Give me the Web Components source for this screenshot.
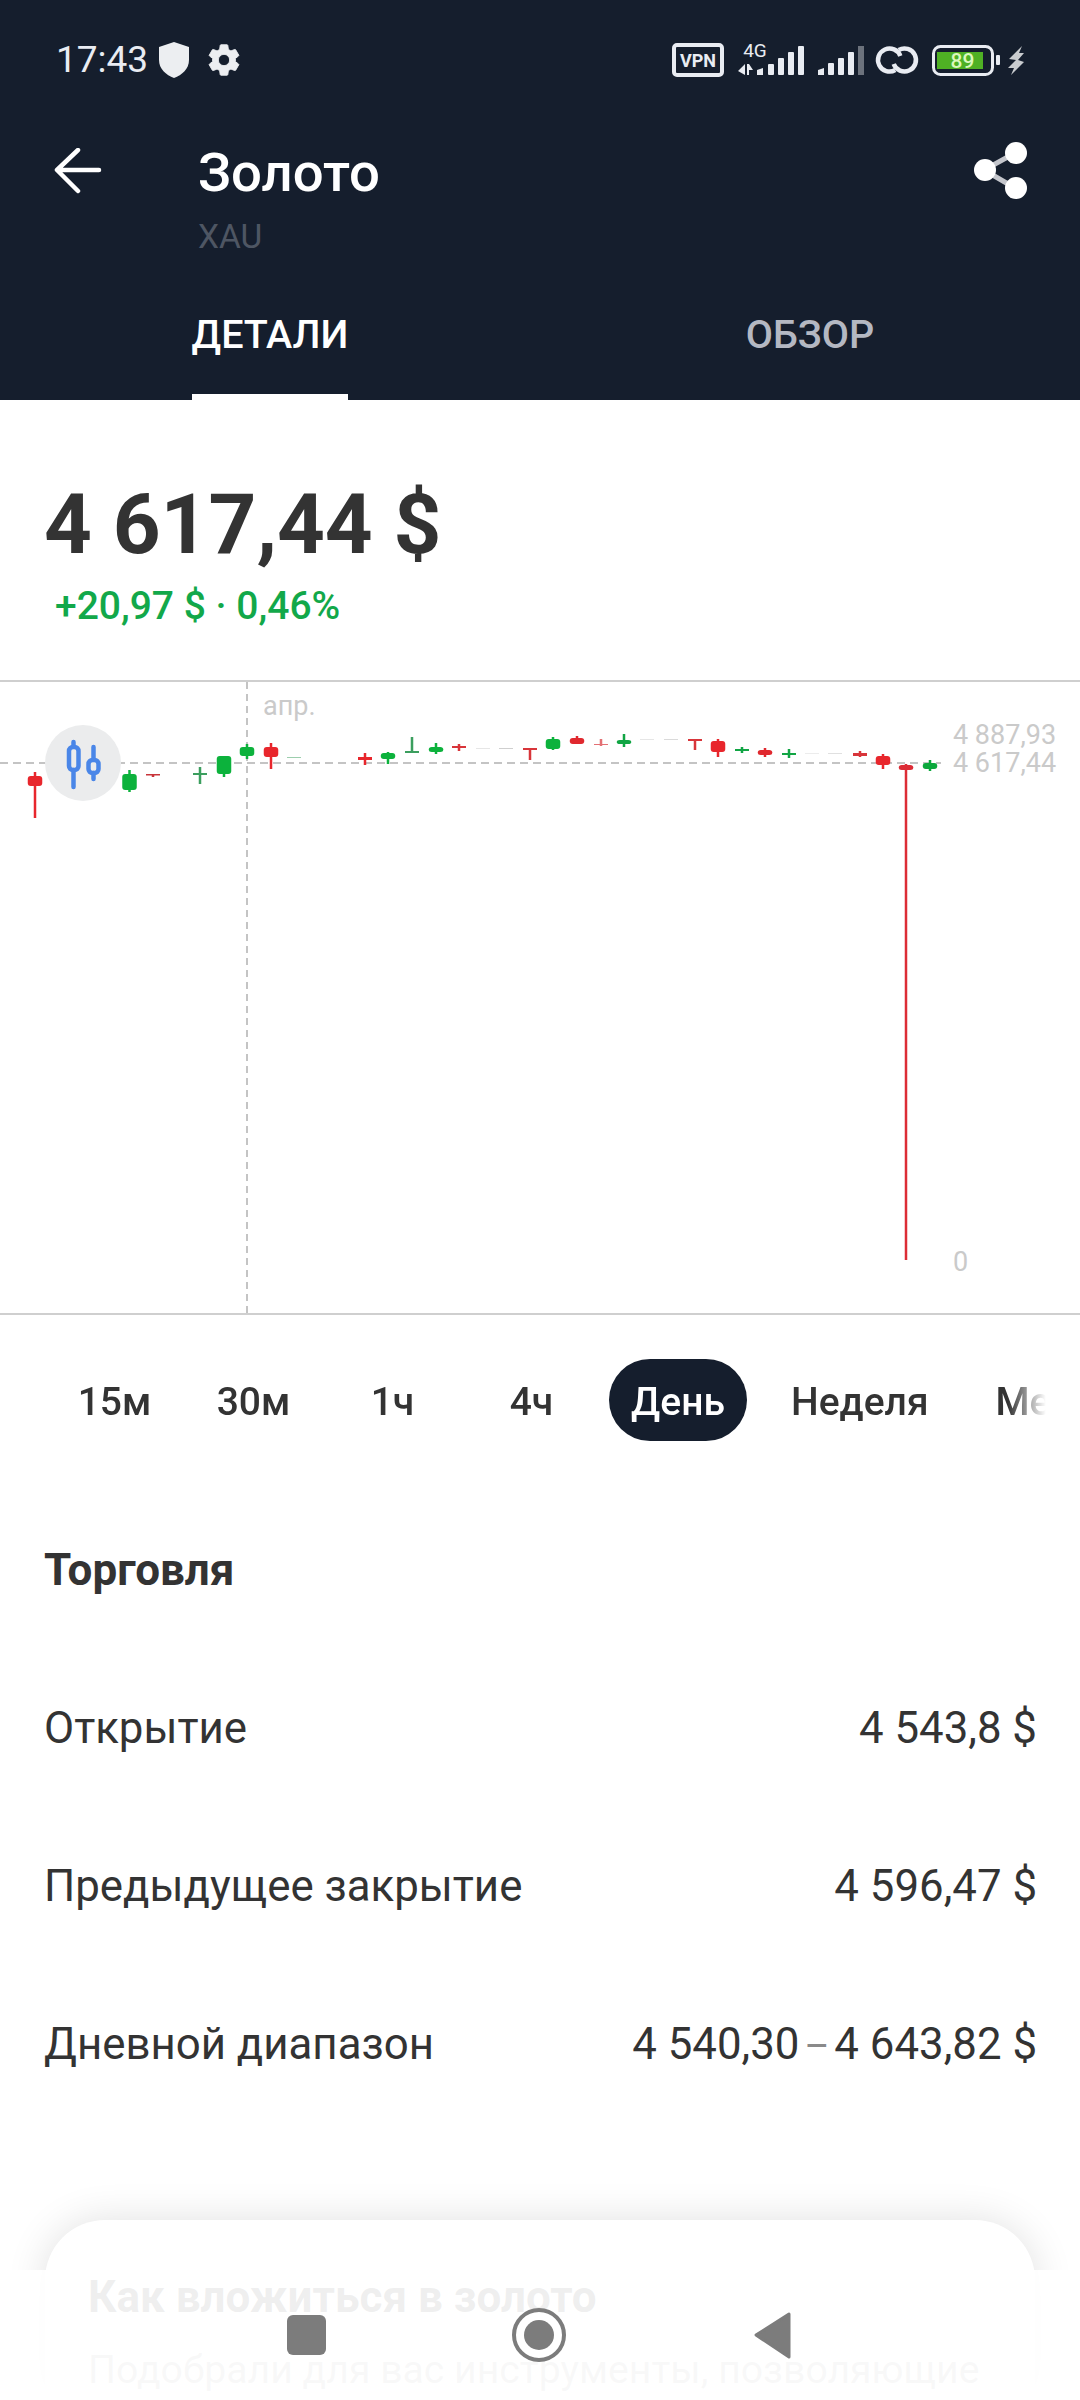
<!DOCTYPE html>
<html lang="ru">
<head>
<meta charset="utf-8">
<title>Золото</title>
<style>
  html, body { margin: 0; padding: 0; background: #fff; }
  body { width: 1080px; height: 2400px; overflow: hidden; position: relative; font-family: Roboto, "Noto Sans", sans-serif; color: #333; }
</style>
</head>
<body>
<status-bar></status-bar>
<app-header title-text="Золото" subtitle="XAU"></app-header>
<price-block price="4 617,44 $" change="+20,97 $ · 0,46%"></price-block>
<candle-chart></candle-chart>
<period-tabs></period-tabs>
<stats-section heading="Торговля">
  <stat-row label="Открытие" value="4 543,8 $"></stat-row>
  <stat-row label="Предыдущее закрытие" value="4 596,47 $"></stat-row>
  <stat-row label="Дневной диапазон" value="4 540,30<i>–</i>4 643,82 $"></stat-row>
</stats-section>
<promo-card>
  <span slot="title">Как вложиться в золото</span>
  <span slot="text">Подобрали для вас инструменты, позволяющие</span>
</promo-card>
<nav-bar></nav-bar>

<script>
// barra de estado
class StatusBar extends HTMLElement {
  constructor () {
    super();
    this.attachShadow({ mode: "open" });
  }
  getStyles () {
    return `
      <style>
        :host { display: flex; align-items: center; height: 120px; box-sizing: border-box; padding: 0 55px 0 56px; background: #151e2d; color: #e9ecf2; }
        .time { font: 400 37px/40px Roboto, sans-serif; }
        svg { display: block; flex: none; }
        .shield { margin-left: 11px; }
        .gear { margin-left: 16px; }
        .right { margin-left: auto; display: flex; align-items: flex-start; height: 40px; }
        .right svg { margin-top: -7px; }
      </style>
    `;
  }
  getTemplate () {
    const template = document.createElement('template');
    template.innerHTML = `
      <span class="time">17:43</span>
      <svg class="shield" width="30" height="36" viewBox="0 0 30 36"><path fill="#eceef1" d="M15 0 L30 5 V18 C30 27 23 33 15 36 C7 33 0 27 0 18 V5 Z"/></svg>
      <svg class="gear" width="38" height="38" viewBox="0 0 24 24"><path fill="#eceef1" stroke="#eceef1" stroke-width=".6" d="M19.140 12.940c.04-.3.06-.61.06-.94 0-.32-.02-.64-.07-.94l2.030-1.580c.18-.14.23-.41.12-.61l-1.920-3.320c-.12-.22-.37-.29-.59-.22l-2.390.96c-.5-.38-1.030-.7-1.620-.94l-.36-2.540c-.04-.24-.24-.41-.48-.41h-3.840c-.24 0-.43.17-.47.41l-.36 2.540c-.59.24-1.130.57-1.620.94l-2.390-.96c-.22-.08-.47 0-.59.22L2.740 8.870c-.12.21-.08.47.12.61l2.030 1.580c-.05.3-.09.63-.09.94s.02.64.07.94l-2.030 1.580c-.18.14-.23.41-.12.61l1.920 3.320c.12.22.37.29.59.22l2.390-.96c.5.38 1.030.7 1.620.94l.36 2.540c.05.24.24.41.48.41h3.840c.24 0 .44-.17.47-.41l.36-2.540c.59-.24 1.130-.56 1.620-.94l2.390.96c.22.08.47 0 .59-.22l1.920-3.320c.12-.22.07-.47-.12-.61l-2.010-1.580zM12 15.600c-1.980 0-3.600-1.620-3.600-3.600s1.620-3.600 3.600-3.600 3.600 1.620 3.600 3.600-1.620 3.600-3.600 3.600z"/></svg>
      <div class="right">
        <svg width="353" height="46" viewBox="672 33 353 46">
          <rect x="674" y="45" width="48" height="30" rx="3" fill="none" stroke="#e9ecf2" stroke-width="4"/>
          <text x="698" y="67" text-anchor="middle" font-family="Roboto, sans-serif" font-weight="700" font-size="18" fill="#e9ecf2">VPN</text>
          <text x="755" y="57" text-anchor="middle" font-family="Roboto, sans-serif" font-size="19" fill="#e9ecf2">4G</text>
          <path fill="#e9ecf2" d="M738 71 L745 64 V75 Z M747 64 L749 64 L753 70 L749 70 V75 L747 75 Z"/>
          <g fill="#e9ecf2">
            <path d="M757 70 L763 68 V75 H757 Z"/><rect x="768" y="64" width="6" height="11" rx="1"/><rect x="778" y="58" width="6" height="17" rx="1"/><rect x="788" y="52" width="6" height="23" rx="1"/><rect x="798" y="46" width="6" height="29" rx="1"/>
            <path d="M818 70 L824 68 V75 H818 Z"/><rect x="828" y="63" width="6" height="12" rx="1"/><rect x="838" y="58" width="6" height="17" rx="1"/><rect x="848" y="52" width="6" height="23" rx="1"/>
          </g>
          <rect x="858" y="46" width="6" height="29" fill="#6c727c"/>
          <g fill="none" stroke="#e9ecf2" stroke-width="4.500">
            <path d="M895.250 70 A11.500 11.500 0 1 1 900.300 56"/>
            <path d="M898.750 50 A11.500 11.500 0 1 1 893.700 64"/>
          </g>
          <rect x="933.500" y="46.500" width="59" height="28" rx="7" fill="none" stroke="#e9ecf2" stroke-width="3"/>
          <rect x="937" y="52" width="46" height="17" fill="#4fb024"/>
          <text x="962.500" y="68" text-anchor="middle" font-family="Roboto, sans-serif" font-weight="500" font-size="21" fill="#dcf8bd">89</text>
          <rect x="996" y="55" width="4" height="10" rx="1" fill="#e9ecf2"/>
          <path fill="#c9cccf" d="M1022 46 L1009 59 L1016 60 L1008 68 L1014 68 L1011 75 L1024 62 L1018 60 L1024 53 L1019 53 Z"/>
        </svg>
      </div>
      ${this.getStyles()}
    `;
    return template;
  }
  render () {
    this.shadowRoot.appendChild(this.getTemplate().content.cloneNode(true));
  }
  connectedCallback () {
    this.render();
  }
}

// cabecera con titulo y pestañas
class AppHeader extends HTMLElement {
  constructor () {
    super();
    this.attachShadow({ mode: "open" });
  }
  getStyles () {
    return `
      <style>
        :host { display: block; height: 280px; background: #151e2d; color: #fff; }
        .top { display: flex; height: 170px; }
        .back { flex: none; width: 198px; box-sizing: border-box; padding: 28px 0 0 53px; }
        .titles { flex: 1; padding-top: 22px; }
        .title { font: 500 54.500px/60px Roboto, sans-serif; }
        .sub { font: 400 33.500px/40px Roboto, sans-serif; color: #4e5663; margin-top: 15px; }
        .share { flex: none; padding: 21px 51px 0 0; }
        svg { display: block; }
        .tabs { display: flex; height: 110px; }
        .tab { flex: 1; text-align: center; }
        .tab span { display: inline-block; box-sizing: border-box; height: 110px; padding: 22px 0 0; font: 500 39.500px/46px Roboto, sans-serif; color: #b4b8c2; }
        .tab.on span { color: #fff; border-bottom: 6px solid #fff; }
      </style>
    `;
  }
  getTemplate () {
    const template = document.createElement('template');
    template.innerHTML = `
      <div class="top">
        <div class="back">
          <svg width="50" height="48" viewBox="0 0 50 48"><path fill="none" stroke="#fff" stroke-width="4.500" stroke-linecap="round" stroke-linejoin="round" d="M46 22 H5 M25 2 L4 22 L25 43"/></svg>
        </div>
        <div class="titles">
          <div class="title">${this.getAttribute('title-text')}</div>
          <div class="sub">${this.getAttribute('subtitle')}</div>
        </div>
        <div class="share">
          <svg width="56" height="60" viewBox="0 0 56 60">
            <path fill="none" stroke="#c4c6cc" stroke-width="5" d="M42 12 L11 29 L42 47"/>
            <circle cx="12" cy="29" r="11" fill="#fff"/><circle cx="43" cy="12" r="11" fill="#fff"/><circle cx="43" cy="47" r="11" fill="#fff"/>
          </svg>
        </div>
      </div>
      <div class="tabs">
        <div class="tab on"><span>ДЕТАЛИ</span></div>
        <div class="tab"><span>ОБЗОР</span></div>
      </div>
      ${this.getStyles()}
    `;
    return template;
  }
  render () {
    this.shadowRoot.appendChild(this.getTemplate().content.cloneNode(true));
  }
  connectedCallback () {
    this.render();
  }
}

class PriceBlock extends HTMLElement {
  constructor () {
    super();
    this.attachShadow({ mode: "open" });
  }
  getStyles () {
    return `
      <style>
        :host { display: block; box-sizing: border-box; height: 280px; padding: 77px 0 0 44px; }
        .price { font: 700 83.500px/96px Roboto, sans-serif; color: #333; }
        .change { font: 500 39px/46px Roboto, sans-serif; color: #12a84a; margin: 10px 0 0 11px; }
      </style>
    `;
  }
  getTemplate () {
    const template = document.createElement('template');
    template.innerHTML = `
      <div class="price">${this.getAttribute('price')}</div>
      <div class="change">${this.getAttribute('change')}</div>
      ${this.getStyles()}
    `;
    return template;
  }
  render () {
    this.shadowRoot.appendChild(this.getTemplate().content.cloneNode(true));
  }
  connectedCallback () {
    this.render();
  }
}

// x, cuerpo arriba, cuerpo abajo, mecha arriba, mecha abajo, color, opacidad
const RED = '#e8262c';
const GREEN = '#0cb23c';
const CANDLES = [
  [35, 776, 786, 772, 818, RED],
  [129.500, 774, 790, 770, 792, GREEN],
  [153, 774, 775.500, 774, 777, '#c8343a'],
  [200, 773, 775, 767, 784, '#3b9e5e'],
  [224, 756, 774, 756, 777, GREEN],
  [247, 747, 756, 744, 759, GREEN],
  [271, 747, 757, 743, 769, RED],
  [294, 757, 758, 757, 758, '#3b9e5e', .5],
  [365, 757, 760, 753, 765, RED],
  [388, 753, 759, 752, 764, GREEN],
  [412, 751, 753, 737, 752, '#3b9e5e'],
  [436, 747, 752, 743, 754, GREEN],
  [459, 746, 748, 744, 751, '#d8353a'],
  [483, 748, 749, 748, 749, '#888', .2],
  [506, 748, 749, 748, 749, '#888', .4],
  [530, 748, 750, 749, 760, '#d8353a'],
  [553, 739, 749, 737, 750, GREEN],
  [577, 738, 744, 736, 744, '#e0282e'],
  [601, 744, 745, 739, 746, '#d8353a', .7],
  [624, 740, 744, 734, 747, '#11a544'],
  [647, 739, 740, 739, 740, '#888', .2],
  [671, 739, 740, 739, 740, '#888', .3],
  [695, 739, 741, 740, 750, '#d8353a'],
  [718, 741, 752, 739, 757, RED],
  [742, 749, 751, 747, 753, '#11a544'],
  [765, 750, 755, 748, 757, '#e0282e'],
  [789, 753, 755, 749, 758, '#11a544'],
  [812, 753, 754, 753, 754, '#888', .15],
  [835, 753, 754, 753, 754, '#888', .25],
  [860, 753, 756, 751, 757, '#d8353a'],
  [883, 756, 765, 754, 769, RED],
  [906, 765, 770, 764, 1260, '#dc2c36'],
  [930, 763, 769, 760, 771, '#0ca83c']
];

class CandleChart extends HTMLElement {
  constructor () {
    super();
    this.attachShadow({ mode: "open" });
  }
  getStyles () {
    return `
      <style>
        :host { display: block; position: relative; height: 635px; box-sizing: border-box; border-top: 2px solid #cfcfcf; border-bottom: 2px solid #cfcfcf; }
        svg.plot { display: block; position: absolute; left: 0; top: 0; }
        .lbl { position: absolute; font: 400 27px/30px Roboto, sans-serif; color: #cacaca; white-space: nowrap; }
        .btn { position: absolute; left: 44.500px; top: 43px; width: 76px; height: 76px; border-radius: 50%; background: #ebeced; }
        .btn svg { display: block; }
      </style>
    `;
  }
  getCandles () {
    return CANDLES.map(([x, bt, bb, wt, wb, color, alpha = 1]) => {
      const h = bb - bt;
      const w = h < 4 ? 14 : 14.500;
      return `<g fill="${color}" opacity="${alpha}">
        <rect x="${x - 1.25}" y="${wt}" width="2.500" height="${wb - wt}"/>
        <rect x="${x - w / 2}" y="${bt}" width="${w}" height="${h}" rx="${h < 4 ? 0 : 3}"/>
      </g>`;
    }).join('');
  }
  getTemplate () {
    const template = document.createElement('template');
    template.innerHTML = `
      <svg class="plot" width="1080" height="631" viewBox="0 682 1080 631">
        <line x1="247" y1="682" x2="247" y2="1313" stroke="#c4c4c4" stroke-width="2" stroke-dasharray="7 5"/>
        <line x1="0" y1="763" x2="941" y2="763" stroke="#c4c4c4" stroke-width="2" stroke-dasharray="8 5"/>
        ${this.getCandles()}
      </svg>
      <span class="lbl" style="left:263px;top:9px">апр.</span>
      <span class="lbl" style="left:953px;top:38px">4 887,93</span>
      <span class="lbl" style="left:953px;top:66px">4 617,44</span>
      <span class="lbl" style="left:953px;top:565px">0</span>
      <div class="btn">
        <svg width="76" height="76" viewBox="44.500 725 76 76" fill="none" stroke="#4a86e8" stroke-width="4.500" stroke-linecap="round">
          <path d="M73 742 V746 M73 770 V787 M93 747 V759 M93 773 V779"/>
          <rect x="68.500" y="747" width="9.500" height="23" rx="4"/>
          <rect x="88" y="760" width="10" height="13" rx="4"/>
        </svg>
      </div>
      ${this.getStyles()}
    `;
    return template;
  }
  render () {
    this.shadowRoot.appendChild(this.getTemplate().content.cloneNode(true));
  }
  connectedCallback () {
    this.render();
  }
}

class PeriodTabs extends HTMLElement {
  constructor () {
    super();
    this.attachShadow({ mode: "open" });
  }
  getStyles () {
    return `
      <style>
        :host { display: flex; box-sizing: border-box; width: 1003px; height: 126px; margin-left: 45px; padding-top: 44px; overflow: hidden;
          -webkit-mask-image: linear-gradient(90deg, #000 963px, transparent 1001px); mask-image: linear-gradient(90deg, #000 963px, transparent 1001px); }
        span { flex: none; box-sizing: border-box; min-width: 139px; height: 82px; padding: 0 32px; font: 500 39px/86px Roboto, sans-serif; color: #333; text-align: center; white-space: nowrap; }
        span.on { background: #151e2d; color: #fff; border-radius: 41px; min-width: 138px; padding: 0 22px; margin: 0 12px 0 8px; }
        span:last-of-type { margin-left: 3px; }
      </style>
    `;
  }
  getTemplate () {
    const template = document.createElement('template');
    template.innerHTML = `
      <span>15м</span><span>30м</span><span>1ч</span><span>4ч</span><span class="on">День</span><span>Неделя</span><span>Месяц</span>
      ${this.getStyles()}
    `;
    return template;
  }
  render () {
    this.shadowRoot.appendChild(this.getTemplate().content.cloneNode(true));
  }
  connectedCallback () {
    this.render();
  }
}

class StatsSection extends HTMLElement {
  constructor () {
    super();
    this.attachShadow({ mode: "open" });
  }
  getStyles () {
    return `
      <style>
        :host { display: flex; flex-direction: column; gap: 108px; padding: 104px 43px 0 44px; }
        h2 { margin: 0; font: 700 44px/50px Roboto, sans-serif; color: #333; }
      </style>
    `;
  }
  getTemplate () {
    const template = document.createElement('template');
    template.innerHTML = `
      <h2>${this.getAttribute('heading')}</h2>
      <slot></slot>
      ${this.getStyles()}
    `;
    return template;
  }
  render () {
    this.shadowRoot.appendChild(this.getTemplate().content.cloneNode(true));
  }
  connectedCallback () {
    this.render();
  }
}

class StatRow extends HTMLElement {
  constructor () {
    super();
    this.attachShadow({ mode: "open" });
  }
  getStyles () {
    return `
      <style>
        :host { display: flex; justify-content: space-between; height: 50px; font: 400 43.800px/50px Roboto, sans-serif; color: #333; }
        i { font-style: normal; font-size: 38px; line-height: 1; color: #8a8a8a; margin: 0 5px; }
      </style>
    `;
  }
  getTemplate () {
    const template = document.createElement('template');
    template.innerHTML = `
      <span>${this.getAttribute('label')}</span>
      <span>${this.getAttribute('value')}</span>
      ${this.getStyles()}
    `;
    return template;
  }
  render () {
    this.shadowRoot.appendChild(this.getTemplate().content.cloneNode(true));
  }
  connectedCallback () {
    this.render();
  }
}

class PromoCard extends HTMLElement {
  constructor () {
    super();
    this.attachShadow({ mode: "open" });
  }
  getStyles () {
    return `
      <style>
        :host { display: block; box-sizing: border-box; height: 180px; margin: 151px 45px 0; padding: 52px 43px 0; background: #fff; border-radius: 60px 60px 0 0; box-shadow: 0 0 40px rgba(0,0,0,.12); }
        .t { font: 700 44px/50px Roboto, sans-serif; color: #333; }
        .d { font: 400 39.200px/50px Roboto, sans-serif; color: #a8a8a8; margin-top: 23px; white-space: nowrap; }
      </style>
    `;
  }
  getTemplate () {
    const template = document.createElement('template');
    template.innerHTML = `
      <div class="t"><slot name="title"></slot></div>
      <div class="d"><slot name="text"></slot></div>
      ${this.getStyles()}
    `;
    return template;
  }
  render () {
    this.shadowRoot.appendChild(this.getTemplate().content.cloneNode(true));
  }
  connectedCallback () {
    this.render();
  }
}

// barra de navegacion, va encima de la tarjeta
class NavBar extends HTMLElement {
  constructor () {
    super();
    this.attachShadow({ mode: "open" });
  }
  getStyles () {
    return `
      <style>
        :host { position: absolute; left: 0; right: 0; bottom: 0; height: 130px; background: rgba(255,255,255,.92); }
        svg { display: block; }
      </style>
    `;
  }
  getTemplate () {
    const template = document.createElement('template');
    template.innerHTML = `
      <svg width="1080" height="130" viewBox="0 2270 1080 130">
        <rect x="287" y="2315" width="39" height="40" rx="6" fill="#7c7c7c"/>
        <circle cx="539" cy="2335" r="25" fill="none" stroke="#7c7c7c" stroke-width="4"/>
        <circle cx="539" cy="2335" r="15" fill="#7c7c7c"/>
        <path fill="#7c7c7c" stroke="#7c7c7c" stroke-width="3" stroke-linejoin="round" d="M789 2314 V2357 L756 2335 Z"/>
      </svg>
      ${this.getStyles()}
    `;
    return template;
  }
  render () {
    this.shadowRoot.appendChild(this.getTemplate().content.cloneNode(true));
  }
  connectedCallback () {
    this.render();
  }
}

customElements.define('status-bar', StatusBar);
customElements.define('app-header', AppHeader);
customElements.define('price-block', PriceBlock);
customElements.define('candle-chart', CandleChart);
customElements.define('period-tabs', PeriodTabs);
customElements.define('stats-section', StatsSection);
customElements.define('stat-row', StatRow);
customElements.define('promo-card', PromoCard);
customElements.define('nav-bar', NavBar);
</script>
</body>
</html>
